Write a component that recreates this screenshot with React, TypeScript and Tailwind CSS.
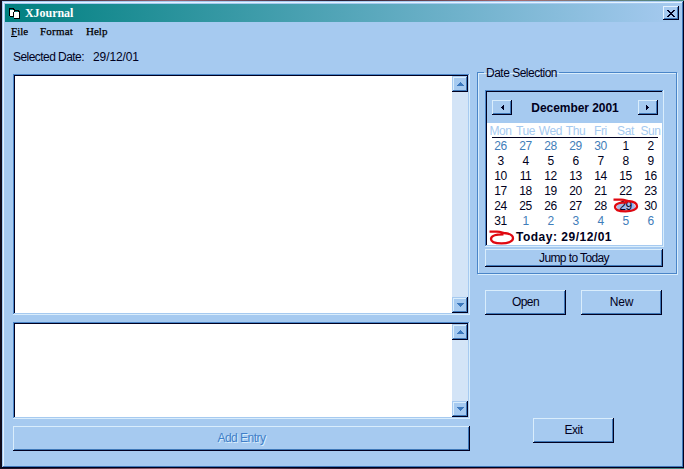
import React from "react";

const raised =
  "bg-[#a6caf0] shadow-[inset_-1px_-1px_#000020,inset_1px_1px_#d9edfc,inset_-2px_-2px_#3f78b8]";
const sunken =
  "bg-white p-[2px] shadow-[inset_-1px_-1px_#d9edfc,inset_1px_1px_#4a85c8,inset_-2px_-2px_#a6caf0,inset_2px_2px_#000020]";

function Button({ label, className }: { label: string; className: string }) {
  return (
    <button className={`flex items-center justify-center whitespace-nowrap ${raised} ${className}`}>
      {label}
    </button>
  );
}

function ScrollButton({ up }: { up?: boolean }) {
  return (
    <button className="flex h-4 w-4 items-center justify-center bg-[#a6caf0] shadow-[inset_-1px_-1px_#000020,inset_1px_1px_#a6caf0,inset_-2px_-2px_#3f78b8,inset_2px_2px_#d9edfc]">
      <svg width="7" height="4" viewBox="0 0 7 4" shapeRendering="crispEdges" fill="#3c78bd">
        <path d={up ? "M3 0h1v1h1v1h1v1h1v1H0V3h1V2h1V1h1z" : "M0 0h7v1H6v1H5v1H4v1H3V3H2V2H1V1H0z"} />
      </svg>
    </button>
  );
}

function TextPane({ className }: { className: string }) {
  return (
    <div className={`flex w-[457px] justify-end ${sunken} ${className}`}>
      <div className="flex w-4 flex-col justify-between bg-[#d3e4f7]">
        <ScrollButton up />
        <ScrollButton />
      </div>
    </div>
  );
}

function Ring({ className }: { className: string }) {
  return (
    <svg className={className} width="26" height="15" viewBox="0 0 26 15" fill="none" stroke="#e00810" strokeWidth="2.3">
      <path d="M0.5 1.6H8C12 1.8 13 2.6 15 3C20 3.4 24 5 24 8.3C24 11.5 19 13.4 12.5 13.4C6 13.4 2 11.8 2 9C2 6 7 4.4 14.5 4.4" />
    </svg>
  );
}

const weeks = [
  [26, 27, 28, 29, 30, 1, 2],
  [3, 4, 5, 6, 7, 8, 9],
  [10, 11, 12, 13, 14, 15, 16],
  [17, 18, 19, 20, 21, 22, 23],
  [24, 25, 26, 27, 28, 29, 30],
  [31, 1, 2, 3, 4, 5, 6],
];

function Arrow({ left }: { left?: boolean }) {
  return (
    <button className={`flex h-[15px] w-5 items-center justify-center ${raised}`}>
      <svg width="3" height="5" viewBox="0 0 3 5" shapeRendering="crispEdges" fill="#000020">
        <path d={left ? "M2 0h1v5H2V4H1V3H0V2h1V1h1z" : "M0 0h1v1h1v1h1v1H2v1H1v1H0z"} />
      </svg>
    </button>
  );
}

function Calendar() {
  return (
    <div className={`h-[157px] w-[179px] ${sunken}`}>
      <div className="flex h-[31px] items-center justify-between bg-[#a6caf0] pr-1 pl-[5px]">
        <Arrow left />
        <span className="text-[12px] font-bold tracking-[-0.05px] whitespace-nowrap">December 2001</span>
        <Arrow />
      </div>
      <div className="ml-[1px] grid h-[14px] w-[175px] grid-cols-7 pt-px text-center text-[12px] leading-[15px] text-[#a6caf0]">
        {["Mon", "Tue", "Wed", "Thu", "Fri", "Sat", "Sun"].map((d) => (
          <span key={d} className="h-[13px] w-[25px] tracking-[-0.4px]">{d}</span>
        ))}
      </div>
      <div className="mr-1 ml-[5px] h-px bg-[#000020]" />
      <div className="ml-[1px] grid w-[175px] grid-cols-7 pt-[1px] text-center text-[12px] leading-[15px]">
        {weeks.flatMap((week, row) =>
          week.map((day, col) => {
            const outside = (row === 0 && col < 5) || (row === 5 && col > 0);
            const selected = row === 4 && col === 5;
            return (
              <span key={`${row}-${col}`} className={`relative h-[15px] tracking-[-0.5px] ${outside ? "text-[#3f7db9]" : ""}`}>
                {selected && <span className="absolute top-[3px] left-[4px] h-[10px] w-[18px] rounded-full bg-[#a6b8e8]" />}
                <span className="relative">{day}</span>
                {selected && <Ring className="absolute -top-px left-0" />}
              </span>
            );
          }),
        )}
      </div>
      <div className="flex h-[16px] items-center pl-[2px]">
        <Ring className="block" />
        <span className="pl-px text-[12px] font-bold tracking-[0.5px] whitespace-nowrap">Today: 29/12/01</span>
      </div>
    </div>
  );
}

export default function App() {
  return (
    <div className="h-[469px] w-[684px] overflow-hidden bg-[linear-gradient(90deg,#161222,#9b6572_25%,#281c32_50%,#aa6b70_75%,#428b82)] pt-px font-['Liberation_Sans',Arial,sans-serif] text-[12px] leading-[14px] text-[#000020]">
      <div className="h-[467px] border-l-2 border-[#100c1c]">
        <div className="h-[467px] w-[682px] bg-[#a6caf0] p-[3px] shadow-[inset_-1px_-1px_#000020,inset_1px_1px_#a6caf0,inset_-2px_-2px_#3f78b8,inset_2px_2px_#e3f2ff]">
          <header className="flex h-[18px] items-center justify-between bg-[linear-gradient(90deg,#008080,#a6caf0)] pr-[2px] pl-1 font-['Liberation_Serif',serif] text-white">
            <div className="flex items-center gap-[4px]">
              <svg width="12" height="11" viewBox="0 0 12 11" shapeRendering="crispEdges">
                <path d="M0 0h5v1h1v1h4v1h1v8H5V9H1V8H0z" fill="#000" />
                <path d="M1 2h4v6H1zM5 4h5v6H5z" fill="#fff" />
                <path d="M1 1h3v1H1zM6 3h3v1H6z" fill="#008080" />
                <path d="M4 4h1v5H4z" fill="#000" />
              </svg>
              <span className="text-[12px] font-bold tracking-[-0.05px]">XJournal</span>
            </div>
            <button className="flex h-[14px] w-4 items-center justify-center bg-[#a6caf0] shadow-[inset_-1px_-1px_#000020,inset_1px_1px_#e3f2ff,inset_-2px_-2px_#3f78b8]">
              <svg width="8" height="7" viewBox="0 0 8 7" shapeRendering="crispEdges">
                <path d="M0 0h2v1h1v1h2V1h1V0h2v1H7v1H6v1H5v1h1v1h1v1h1v1H6V6H5V5H3v1H2v1H0V6h1V5h1V4h1V3H2V2H1V1H0z" fill="#000020" />
              </svg>
            </button>
          </header>
          <nav className="flex h-[19px] items-center pb-[2px] pl-[6px] font-['Liberation_Serif',serif] text-[11px] text-black [-webkit-text-stroke:0.25px]">
            <span className="w-[29px]"><u>F</u>ile</span>
            <span className="w-[46px] tracking-[0.2px]">Format</span>
            <span>Help</span>
          </nav>
          <main className="flex">
            <section className="w-[472px] pl-2">
              <div className="flex h-[33px] pt-[9px] whitespace-nowrap">
                <span className="w-20 tracking-[-0.55px]">Selected Date:</span>
                <span className="tracking-[-0.1px]">29/12/01</span>
              </div>
              <TextPane className="h-[241px]" />
              <TextPane className="mt-[7px] h-[97px]" />
              <Button label="Add Entry" className="mt-[7px] h-[25px] w-[457px] pb-[2px] tracking-[-0.5px] text-[#3f7fc9] text-shadow-[1px_1px_#d9edfc]" />
            </section>
            <aside className="pt-[23px]">
              <fieldset className="h-[210px] w-[200px] border border-[#4a85c8] pl-[7px] shadow-[inset_1px_1px_#d9edfc,1px_1px_#d9edfc]">
                <legend className="ml-[-1px] px-[2px] pt-[2px] tracking-[-0.5px]">Date Selection</legend>
                <div className="pt-[10px]">
                  <Calendar />
                  <Button label="Jump to Today" className="mt-[2px] h-[18px] w-[178px] tracking-[-0.6px]" />
                </div>
              </fieldset>
              <div className="mt-4 flex gap-[15px] pl-2">
                <Button label="Open" className="h-[25px] w-[81px] pb-[2px] tracking-[-0.6px]" />
                <Button label="New" className="h-[25px] w-[81px] pb-[2px] tracking-[-0.2px]" />
              </div>
              <Button label="Exit" className="mt-[103px] ml-14 h-[25px] w-[81px] pb-[2px] tracking-[-0.5px]" />
            </aside>
          </main>
        </div>
      </div>
    </div>
  );
}
